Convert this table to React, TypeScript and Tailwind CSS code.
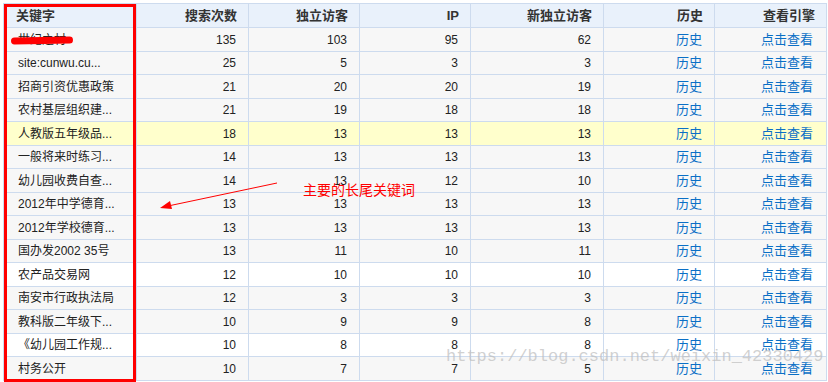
const rows: { k: string; v: number[]; bg?: string }[] = [
  { k: "世纪之村", v: [135, 103, 95, 62] },
  { k: "site:cunwu.cu...", v: [25, 5, 3, 3] },
  { k: "招商引资优惠政策", v: [21, 20, 20, 19] },
  { k: "农村基层组织建...", v: [21, 19, 18, 18] },
  { k: "人教版五年级品...", v: [18, 13, 13, 13], bg: "bg-[#ffffcc]" },
  { k: "一般将来时练习...", v: [14, 13, 13, 13] },
  { k: "幼儿园收费自查...", v: [14, 13, 12, 10] },
  { k: "2012年中学德育...", v: [13, 13, 13, 13] },
  { k: "2012年学校德育...", v: [13, 13, 13, 13] },
  { k: "国办发2002 35号", v: [13, 11, 10, 11] },
  { k: "农产品交易网", v: [12, 10, 10, 10], bg: "bg-white" },
  { k: "南安市行政执法局", v: [12, 3, 3, 3] },
  { k: "教科版二年级下...", v: [10, 9, 9, 8] },
  { k: "《幼儿园工作规...", v: [10, 8, 8, 8], bg: "bg-white" },
  { k: "村务公开", v: [10, 7, 7, 5] },
];

const widths = ["w-[134px] border-l", "w-[112px]", "w-[111px]", "w-[111px]", "w-[133px]", "w-[111px]", "w-[112px]"];
const heads = ["关键字", "搜索次数", "独立访客", "IP", "新独立访客", "历史", "查看引擎"];

export default function App() {
  return (
    <div className="relative w-[828px] h-[382px] bg-white overflow-hidden text-[12px] text-[#222]" style={{ fontFamily: '"Liberation Sans", Arial, "Noto Sans CJK SC", sans-serif' }}>
      <div className="ml-[3px] mt-[3px] w-[824px]">
        <div className="flex h-[25px] bg-[#e9f1fb] border-y border-[#cddbee] font-bold text-[13px] text-[#333]">
          {heads.map((h, i) => (
            <div key={h} className={`${widths[i]} border-r border-[#cddbee] flex items-center ${i === 0 ? "pl-[12px]" : "justify-end pr-[11px]"}`}>
              {h}
            </div>
          ))}
        </div>
        {rows.map((r, ri) => (
          <div key={ri} className={`flex border-b border-[#cddbee] ${ri % 2 === 0 ? "h-[24px]" : "h-[23px]"} ${r.bg ?? "bg-[#f7f7f7]"}`}>
            <div className={`${widths[0]} border-r border-[#cddbee] flex items-center pl-[14px] whitespace-nowrap`}>{r.k}</div>
            {r.v.map((n, ci) => (
              <div key={ci} className={`${widths[ci + 1]} border-r border-[#cddbee] flex items-center justify-end pr-[12px]`}>{n}</div>
            ))}
            <div className={`${widths[5]} border-r border-[#cddbee] flex items-center justify-end pr-[12px] text-[#0a6fc6] text-[13px]`}>历史</div>
            <div className={`${widths[6]} border-r border-[#cddbee] flex items-center justify-end pr-[13px] text-[#0a6fc6] text-[13px]`}>点击查看</div>
          </div>
        ))}
      </div>

      {/* markup drawn over the screenshot */}
      <div className="absolute left-[11px] top-[37px] w-[62px] h-[7px] rounded-full bg-[#ff0000] -rotate-1" />
      <div className="absolute left-[4px] top-[4px] w-[132px] h-[378px] border-[3px] border-[#ff0000]" />
      <svg className="absolute left-0 top-0" width="828" height="382">
        <line x1="277" y1="183" x2="168" y2="206" stroke="#ff0000" strokeWidth="1" />
        <polygon points="160,208 170,201 172,209" fill="#ff0000" />
      </svg>
      <div className="absolute left-[303px] top-[179px] text-[14px] text-[#ff0000]" style={{ fontFamily: '"Noto Sans CJK SC", sans-serif' }}>
        主要的长尾关键词
      </div>
      <div className="absolute left-[446px] top-[344px] text-[17px] text-[#bdbdbd]/70 whitespace-nowrap" style={{ fontFamily: '"Liberation Mono", monospace' }}>
        https://blog.csdn.net/weixin_42330429
      </div>
    </div>
  );
}
